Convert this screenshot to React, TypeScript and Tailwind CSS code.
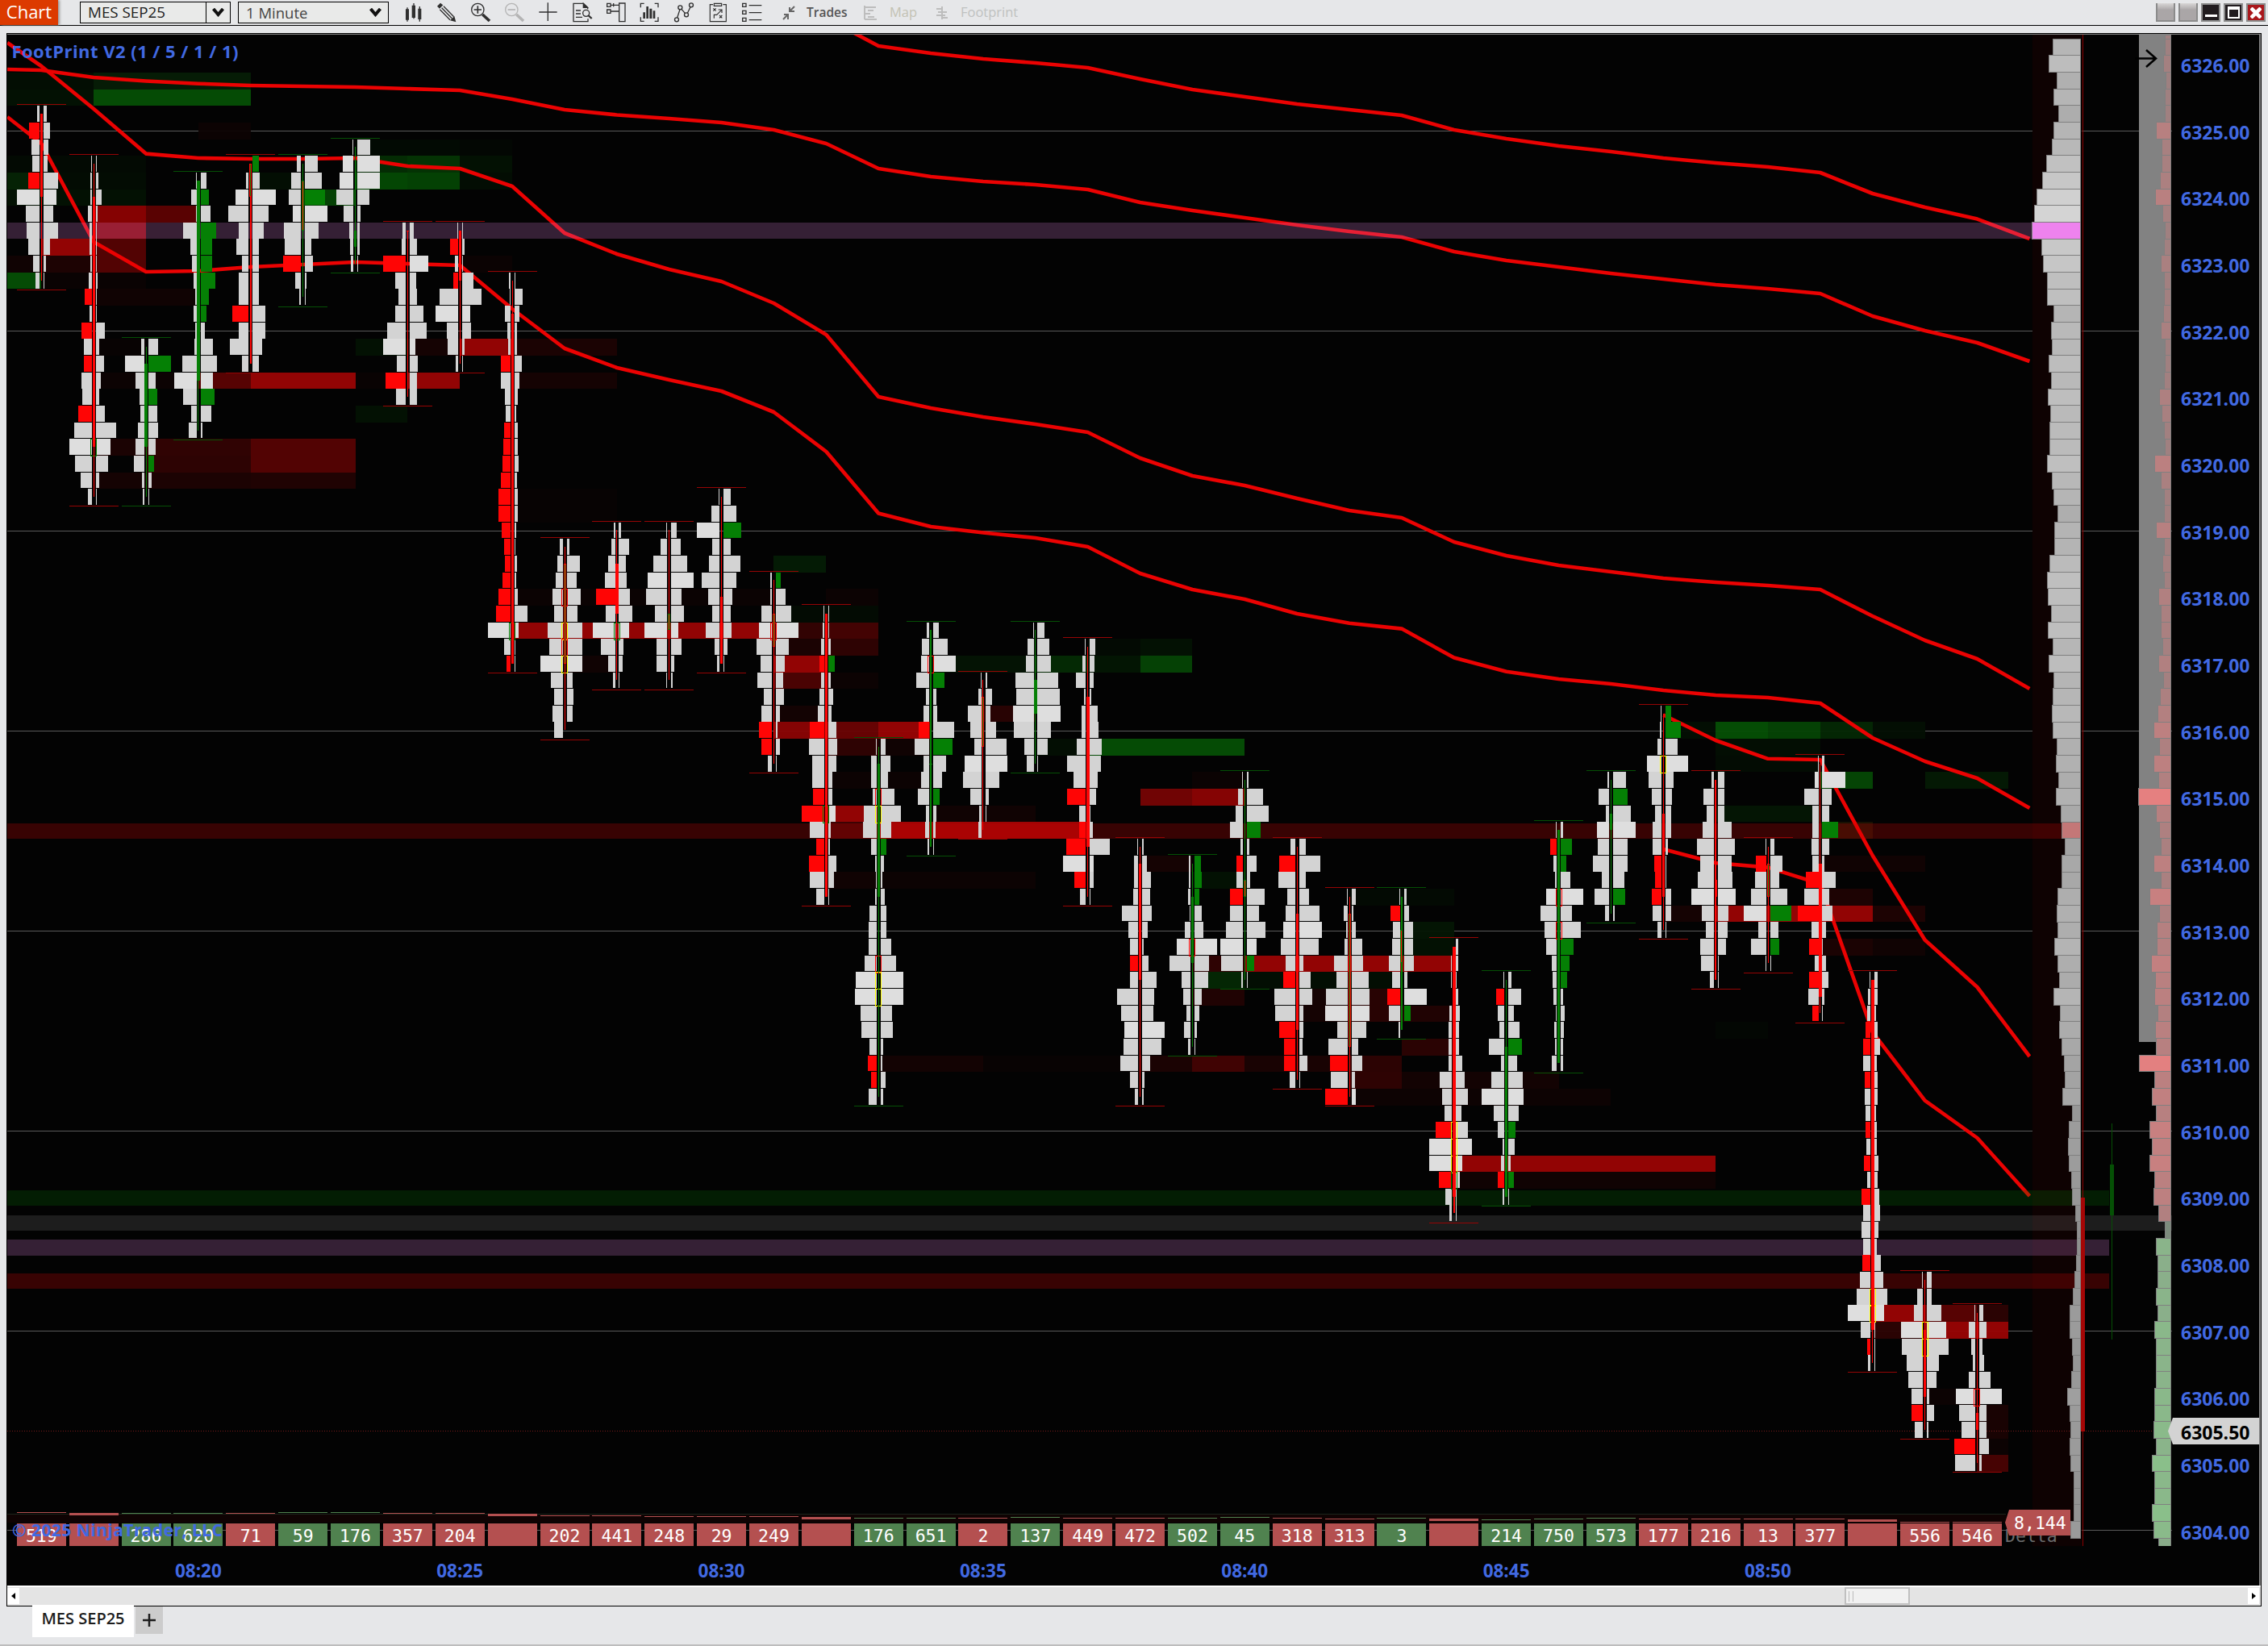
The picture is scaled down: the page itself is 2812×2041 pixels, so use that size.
import React from 'react';

type BodyKind = 'r' | 'g' | 'x' | 'y';

interface Candle {
  start: number; // first tick row, row 0 = 6325.00
  dir: 'r' | 'g';
  body: [number, number, BodyKind];
  rows: string; // bid/ask volume per tick, r / g marks an imbalance
  wick?: number;
  marks?: [number, string][];
}

const COL = 64.87;
const ROW = 20.655;
const X0 = 51.3;
const Y0 = 151.9;
const VOL = 1 / 2.24;

const colX = (c: number) => X0 + c * COL;
const rowY = (r: number) => Y0 + r * ROW;

const CANDLES: Candle[] = [
  { start: -1, dir: 'r', body: [-1, 4, 'r'], rows: '7/9 r29/18 23/13 20/11 r32/40 63/36 38/27 36/40 32/18 18/7 11/2' },
  { start: 2, dir: 'r', body: [4, 19, 'r'], marks: [[19, 'g']], rows: '2/3 4/7 4/16 11/5 7/3 7/3 4/3 9/5 r20/3 7/3 r29/25 22/9 r23/23 29/14 27/9 r38/25 49/56 63/41 47/34 31/9 11/3' },
  { start: 13, dir: 'g', body: [14, 19, 'g'], rows: '8/27 53/g63 24/22 13/g25 10/25 17/27 24/20 28/g16 6/9 4/2' },
  { start: 3, dir: 'g', body: [3, 15, 'g'], rows: '2/17 15/g24 2/29 38/g44 18/g33 13/g33 9/g42 4/g24 9/g17 4/13 6/35 40/47 62/35 38/g40 15/31 22/6' },
  { start: 2, dir: 'r', body: [2, 4, 'x'], wick: 2, rows: '2/g16 7/20 38/63 58/43 29/31 34/16 20/16 27/16 27/18 r45/34 29/36 52/27 18/16' },
  { start: 2, dir: 'g', body: [3, 6, 'y'], rows: '12/36 27/47 34/g56 23/62 48/38 45/18 r50/22 16/5 5/2' },
  { start: 1, dir: 'g', body: [6, 7, 'g'], rows: '2/36 29/63 38/63 47/34 27/9 11/7 9/7 7/2' },
  { start: 6, dir: 'r', body: [6, 6, 'r'], rows: '9/11 11/20 r63/51 29/18 20/20 29/38 52/47 63/16 25/22 r56/20 27/20' },
  { start: 6, dir: 'r', body: [6, 9, 'r'], rows: '2/2 r22/8 9/3 r13/31 51/53 62/22 31/24 29/8 6/2' },
  { start: 9, dir: 'r', body: [11, 32, 'r'], marks: [[30, 'g']], rows: '3/3 2/22 16/13 9/7 7/7 r27/20 27/13 16/9 12/4 r18/9 r20/9 r23/11 r27/7 r34/9 r33/9 r24/5 r18/3 r15/7 r22/5 r33/9 r40/36 62/12 18/3 r11/3' },
  { start: 25, dir: 'r', body: [26, 32, 'x'], marks: [[28, 'r'], [30, 'y'], [31, 'r'], [32, 'y']], rows: '9/7 14/36 20/27 29/40 23/29 43/43 38/43 63/43 34/16 23/18 29/16 23/2' },
  { start: 24, dir: 'r', body: [26, 29, 'r'], marks: [[30, 'g']], rows: '4/6 11/27 20/18 29/22 r53/31 26/38 62/29 40/13 20/11 6/2' },
  { start: 24, dir: 'r', body: [29, 30, 'y'], rows: '4/14 20/27 40/45 54/63 60/29 34/36 63/20 31/29 31/9 4/3' },
  { start: 22, dir: 'r', body: [28, 32, 'r'], rows: '3/20 23/36 63/g49 20/20 29/47 50/36 32/25 20/20 38/22 14/11 7/2' },
  { start: 27, dir: 'r', body: [29, 31, 'x'], marks: [[30, 'r']], rows: '6/g14 6/27 29/43 36/63 42/36 31/25 40/21 22/23 29/12 r36/5 r29/12 11/3' },
  { start: 29, dir: 'r', body: [29, 46, 'r'], marks: [[41, 'g']], rows: '2/2 5/2 9/7 r14/g18 9/7 14/14 18/9 r40/22 43/25 34/22 34/11 r31/11 r63/20 40/7 r23/5 r43/22 40/16 23/2' },
  { start: 37, dir: 'g', body: [38, 46, 'g'], marks: [[40, 'r'], [41, 'y'], [50, 'r'], [51, 'y'], [52, 'y']], rows: '2/13 15/27 15/20 11/38 35/56 38/29 15/g15 4/9 2/4 4/11 20/15 22/15 22/29 33/44 59/63 61/63 45/31 43/34 21/7 r25/4 r16/13 23/7' },
  { start: 30, dir: 'g', body: [38, 38, 'g'], wick: 2, marks: [[32, 'r']], rows: '7/16 20/40 23/63 36/g31 9/9 16/13 r29/58 40/g54 16/36 23/25 32/g18 9/9 11/7 5/2' },
  { start: 33, dir: 'r', body: [34, 37, 'x'], rows: '2/6 9/18 38/15 31/29 20/60 47/62 51/40 31/9 6/4 9/2' },
  { start: 30, dir: 'g', body: [33, 35, 'g'], rows: '2/20 16/32 22/38 51/58 49/61 58/63 54/36 25/29 18/2' },
  { start: 31, dir: 'r', body: [34, 43, 'r'], rows: '3/16 9/13 27/11 5/4 12/22 12/24 25/33 52/31 34/22 r52/18 18/2 r18/9 r54/56 63/11 r32/11 16/2' },
  { start: 43, dir: 'r', body: [44, 51, 'r'], rows: '2/3 11/12 11/25 15/23 45/27 27/16 24/3 r24/18 24/41 58/34 47/32 38/63 40/54 49/21 22/7 9/3' },
  { start: 44, dir: 'g', body: [46, 50, 'g'], wick: 1.5, marks: [[49, 'r']], rows: '5/g18 5/g20 7/g13 2/20 16/25 38/63 58/40 25/38 20/20 11/13 18/7 7/2' },
  { start: 39, dir: 'g', body: [45, 46, 'y'], rows: '2/4 13/44 20/60 35/g38 6/6 r17/27 17/9 r35/49 35/33 47/51 62/27 60/g20 4/2' },
  { start: 43, dir: 'r', body: [47, 54, 'r'], rows: '13/18 r45/58 47/18 22/27 27/56 34/63 40/54 27/11 r34/32 58/36 56/11 r45/11 r31/9 r31/23 16/2' },
  { start: 46, dir: 'r', body: [47, 55, 'x'], rows: '2/13 11/6 4/11 9/31 38/33 31/47 60/49 62/49 29/42 53/18 r49/31 47/9 r62/13' },
  { start: 46, dir: 'g', body: [48, 50, 'y'], wick: 1.5, rows: '2/7 r25/14 20/25 22/25 31/29 22/9 r34/63 31/g20 4/2' },
  { start: 49, dir: 'r', body: [49, 64, 'r'], wick: 1.5, marks: [[60, 'y'], [61, 'y'], [62, 'y'], [63, 'g']], rows: '2/5 4/5 4/2 2/5 7/11 11/9 9/7 11/18 34/23 27/32 22/14 r45/32 63/45 63/16 r36/11 18/2 7/2' },
  { start: 51, dir: 'g', body: [55, 64, 'g'], rows: '3/9 r23/36 18/15 14/31 43/g38 9/24 36/40 63/42 30/29 18/g20 5/18 9/7 r18/g15 5/2' },
  { start: 42, dir: 'g', body: [42, 56, 'g'], marks: [[46, 'r'], [48, 'r']], rows: '2/7 r18/g30 9/g16 4/27 29/63 45/32 33/56 29/g36 13/g25 11/g18 9/7 2/12 7/9 4/7 13/7' },
  { start: 39, dir: 'g', body: [41, 42, 'g'], wick: 1.5, rows: '5/36 29/g40 9/49 34/63 32/40 45/40 20/31 41/g34 11/4' },
  { start: 35, dir: 'r', body: [41, 46, 'r'], marks: [[38, 'y']], rows: '2/g15 4/g42 11/33 40/62 35/22 26/18 18/15 24/15 24/6 r20/2 r18/2 r26/15 24/15 11/2' },
  { start: 39, dir: 'r', body: [45, 46, 'r'], wick: 1.5, rows: '7/18 29/18 20/18 31/38 47/47 38/38 45/41 63/49 34/29 22/27 38/23 36/2 11/2' },
  { start: 43, dir: 'r', body: [44, 46, 'x'], rows: '2/11 r29/35 31/26 42/47 62/g60 22/24 42/g26 2/2' },
  { start: 38, dir: 'r', body: [44, 52, 'r'], rows: '2/5 11/63 40/25 18/18 18/g43 20/20 18/5 r36/36 40/20 r58/27 20/11 r27/2 11/11 r27/16 29/5 r16/2' },
  { start: 51, dir: 'r', body: [51, 72, 'r'], marks: [[70, 'y'], [71, 'y']], rows: '3/9 7/9 9/4 r14/9 r21/15 21/6 r16/9 16/9 14/4 r14/6 12/6 r18/11 9/9 r25/13 21/15 25/11 21/6 r23/17 31/24 38/36 63/26 29/2 r11/2 7/2' },
  { start: 69, dir: 'r', body: [72, 76, 'r'], marks: [[72, 'y'], [73, 'y']], rows: '4/14 17/14 26/40 62/54 60/60 45/34 42/27 31/7 r31/20 22/3' },
  { start: 71, dir: 'r', body: [77, 78, 'r'], marks: [[76, 'r']], rows: '3/11 18/20 11/9 7/13 18/31 54/63 45/20 38/20 r59/27 56/6' },
];

// resting liquidity: row, from column, to column, colour
const EDGE = -0.65;
const END = 37.6;
const HEAT: [number, number, number, string][] = [
  [-3, EDGE, 1, '#030f03'], [-3, 1, 4, '#061d06'], [-2, EDGE, 1, '#031203'], [-2, 1, 4, '#054f05'],
  [0, 3, 4, '#0d0303'], [1, 6, 8, '#020b03'], [1, 8, 9, '#030703'],
  [2, EDGE, 2, '#030b03'], [2, 6, 7, '#042e04'], [2, 7, 8, '#043604'], [2, 8, 9, '#031203'],
  [3, EDGE, 0, '#052405'], [3, 0, 2, '#030d03'], [3, 4, 5, '#030f03'], [3, 6, 7, '#044a04'], [3, 7, 8, '#044504'], [3, 8, 9, '#030e03'],
  [4, EDGE, 2, '#031203'], [4, 5, 6, '#054505'], [5, 1, 2, '#8c0202'], [5, 2, 3, '#5e0202'],
  [6, 1, 2, '#8c0202'], [6, 2, 3, '#080303'], [7, 0, 1, '#9a0404'], [7, 1, 2, '#560303'],
  [8, EDGE, 0, '#110303'], [8, 0, 1, '#1f0303'], [8, 1, 2, '#560303'], [8, 8, 9, '#0c0303'],
  [9, EDGE, 0, '#054f05'], [9, 0, 2, '#0b0303'], [10, 1, 3, '#110303'], [13, 1, 2, '#080303'],
  [13, 6, 7, '#031203'], [13, 7, 8, '#160303'], [13, 8, 9, '#9a0404'], [13, 9, 11, '#1c0303'],
  [15, 1, 3, '#0d0303'], [15, 3, 4, '#5c0303'], [15, 4, 6, '#9a0404'], [15, 6, 7, '#0a0303'], [15, 7, 8, '#9a0404'], [15, 9, 11, '#160303'],
  [17, 6, 7, '#031203'], [19, 1, 2, '#1c0303'], [19, 2, 4, '#330303'], [19, 4, 6, '#560303'],
  [20, 2, 4, '#2f0303'], [20, 4, 6, '#560303'], [21, 1, 2, '#160303'], [21, 2, 4, '#1e0303'], [21, 4, 6, '#220303'],
  [22, 9, 11, '#070303'], [23, 9, 11, '#070303'], [26, 14, 15, '#041c05'],
  [28, 9, 14, '#0c0303'], [28, 15, 16, '#0d0303'], [29, 14, 16, '#030c03'],
  [30, 9, 14, '#9a0404'], [30, 14, 15, '#350303'], [30, 15, 16, '#470303'], [31, 14, 15, '#1c0303'], [31, 15, 16, '#300303'],
  [32, 10, 11, '#110303'], [32, 14, 15, '#9a0404'], [32, 17, 19, '#041404'],
  [33, 14, 15, '#4e0303'], [33, 15, 16, '#0d0303'], [35, 14, 15, '#140303'], [35, 18, 19, '#2a0303'],
  [36, 14, 15, '#8c0404'], [36, 15, 16, '#6b0303'], [36, 16, 17, '#9a0404'], [37, 15, 16, '#300303'], [37, 16, 17, '#110303'],
  [39, 15, 17, '#0d0303'], [41, 15, 16, '#9a0404'], [41, 17, 19, '#110303'], [42, 15, 16, '#400303'], [42, 16, 20, '#a80404'],
  [45, 15, 16, '#110303'], [45, 16, 19, '#0d0303'], [31, 20, 21, '#030b03'], [31, 21, 22, '#031203'],
  [32, 19, 20, '#042b04'], [32, 20, 21, '#031603'], [32, 21, 22, '#054505'], [37, 19, 20, '#030f03'], [37, 20, 23, '#054f05'],
  [39, 22, 23, '#0c0303'], [40, 21, 22, '#760404'], [40, 22, 23, '#8c0404'], [44, 21, 22, '#160303'], [45, 22, 23, '#031203'],
  [50, 22, 23, '#300303'], [50, 23, 27, '#9a0404'], [51, 22, 23, '#042804'], [51, 23, 26, '#030f03'],
  [52, 22, 23, '#220303'], [52, 24, 25, '#160303'], [52, 25, 26, '#2a0303'], [53, 24, 25, '#160303'], [53, 25, 26, '#2a0303'], [53, 26, 27, '#220303'],
  [55, 26, 27, '#2c0303'], [56, 16, 18, '#140303'], [56, 18, 21, '#080303'], [56, 21, 22, '#1c0303'], [56, 22, 23, '#430303'], [56, 23, 25, '#1a0303'], [56, 25, 26, '#2e0303'],
  [57, 25, 26, '#300303'], [57, 26, 29, '#140303'], [58, 25, 30, '#0e0303'],
  [46, 25, 27, '#030b03'], [48, 26, 27, '#041604'], [49, 26, 27, '#031203'],
  [36, 31, 32, '#030f03'], [36, 32, 33, '#055005'], [36, 33, 34, '#054505'], [36, 34, 35, '#042804'], [36, 35, 36, '#030f03'],
  [37, 32, 34, '#030f03'], [38, 32, 34, '#030d03'], [39, 34, 35, '#054805'], [39, 36, END, '#041a04'], [41, 32, 34, '#041604'], [42, 34, 35, '#1a1203'],
  [44, 34, 36, '#110303'], [46, 34, 35, '#1f0303'], [47, 31, 32, '#160303'], [47, 32, 35, '#9a0404'], [47, 35, 36, '#1f0303'],
  [49, 34, 35, '#1c0303'], [49, 35, 36, '#110303'], [54, 32, 33, '#030703'], [62, 27, 32, '#9a0404'], [63, 27, 32, '#110303'],
  [71, 35, 36, '#9a0404'], [71, 36, 37, '#5c0303'], [71, 37, END, '#2c0303'], [72, 35, 36, '#2c0303'], [72, 36, END, '#9a0404'],
  [76, 36, 37, '#0d0303'], [77, 37, END, '#1a0303'], [78, 37, END, '#1a0303'], [79, 37, END, '#0d0303'], [80, 37, END, '#4a0303'],
];

// VWAP and its deviation lines, first value sits at column `from`
const LINES: { from: number; lead?: number; y: number[] }[] = [
  { from: 16, lead: 15.45, y: [38, 57, 66, 73, 78, 84, 98, 111, 120, 129, 136, 143, 161, 172, 181, 188, 196, 202, 207, 214, 240, 257, 271.6, 296] },
  { from: 0, lead: EDGE, y: [86, 87, 96, 100.5, 103.7, 106, 107, 108, 110, 112, 123, 136, 142.5, 147, 152, 161, 178, 209, 219, 225, 229, 235, 251, 261, 270, 279, 287, 294, 312, 323, 331, 339, 346, 353, 358, 364, 392, 410, 425, 448] },
  { from: 0, lead: EDGE, y: [53, 82, 135, 190.6, 196, 197, 197, 196, 206, 209, 231, 289, 315, 334, 349, 376, 415, 492, 506, 517, 526, 536, 568, 590, 602, 618, 633, 642, 672, 689, 701, 709, 717, 722, 726, 731, 764, 794, 817, 854] },
  { from: 0, lead: EDGE, y: [145, 178, 300, 337, 336, 331, 328, 325, 327, 329, 383, 432, 456, 471, 485, 511, 560, 636.5, 653, 660.5, 667, 678, 711, 731, 743, 761, 772.7, 779.6, 815.5, 832.7, 842, 848, 856, 862, 865, 872, 915, 944, 965, 1002] },
  { from: 31, y: [886.5, 918, 940.8, 942, 1061, 1165.5, 1224, 1310] },
  { from: 31, y: [1053, 1070, 1075.6, 1096, 1280, 1364.7, 1411, 1483] },
];

const PROFILE = [
  34, 39, 29, 33, 27, 33, 35, 42, 47, 54, 57, 60, 48, 46, 41, 41, 33, 36, 35, 39, 36, 40, 37, 38, 38, 41, 35, 33, 28, 32,
  32, 38, 41, 40, 36, 40, 34, 39, 33, 34, 35, 34, 29, 30, 27, 30, 24, 23, 19, 23, 23, 28, 29, 28, 32, 28, 26, 33, 25, 26,
  23, 20, 19, 22, 10, 14, 15, 14, 11, 10, 6, 4, 4, 5, 7, 9, 13, 13, 10, 9, 11, 16, 13, 12, 13, 12, 8, 8, 8, 12,
];

const BOOK = [
  7, 7, 9, 6, 7, 7, 18, 11, 11, 13, 19, 10, 7, 8, 12, 8, 8, 9, 12, 7, 7, 8, 14, 11, 8, 7, 20, 12, 8, 8, 18,
  8, 10, 8, 15, 12, 12, 10, 15, 9, 13, 16, 21, 14, 21, 15, 40, 18, 14, 12, 21, 12, 26, 14, 17, 17, 24, 19, 20, 16, 19,
  18, 39, 20, 23, 18, 26, 23, 26, 20, 21, 15, 7, 18, 16, 16, 18, 16, 20, 18, 18, 18, 20, 20, 21, 18, 23, 20, 20, 23, 21, 15,
];

// per-bar delta: value, sign, offset of the cumulative marker
const DELTA: [string, 'r' | 'g', number][] = [
  ['519', 'r', 1875], ['', 'r', 1876], ['286', 'g', 1876], ['620', 'g', 1876], ['71', 'r', 1876], ['59', 'g', 1875], ['176', 'g', 1875],
  ['357', 'r', 1876], ['204', 'r', 1876], ['', 'r', 1877], ['202', 'r', 1879], ['441', 'r', 1879], ['248', 'r', 1880], ['29', 'r', 1880],
  ['249', 'r', 1880], ['', 'r', 1881], ['176', 'g', 1882], ['651', 'g', 1882], ['2', 'r', 1882], ['137', 'g', 1881], ['449', 'r', 1882],
  ['472', 'r', 1882], ['502', 'g', 1882], ['45', 'g', 1881], ['318', 'r', 1882], ['313', 'r', 1883], ['3', 'g', 1882], ['', 'r', 1883],
  ['214', 'g', 1884], ['750', 'g', 1883], ['573', 'g', 1882], ['177', 'r', 1883], ['216', 'r', 1883], ['13', 'r', 1883], ['377', 'r', 1883],
  ['', 'r', 1884], ['556', 'r', 1887], ['546', 'r', 1887],
];

const PRICES = Array.from({ length: 23 }, (_, i) => (6326 - i).toFixed(2));
const TIMES = ['08:20', '08:25', '08:30', '08:35', '08:40', '08:45', '08:50'];

const TONE: Record<string, string> = { r: '#ff0505', g: '#058005', y: '#ffff00' };

function FootprintCandle({ candle, col }: { candle: Candle; col: number }) {
  const x = colX(col);
  const rows = candle.rows.split(' ').map((cell) => {
    const [bid, ask] = cell.split('/');
    return {
      bid: parseInt(bid.replace('r', ''), 10),
      ask: parseInt(ask.replace('g', ''), 10),
      sell: bid[0] === 'r',
      buy: ask[0] === 'g',
    };
  });
  const mid = ROW / 2 - 0.5;
  const top = rowY(candle.start);
  const bottom = rowY(candle.start + rows.length);
  const wick = candle.wick ?? 1;
  const [open, close, kind] = candle.body;
  const bodyX = Math.round(x - 1.5);
  const bodyTop = rowY(open) + mid;
  const bodyHeight = Math.max(1, (close - open) * ROW);
  const edge = candle.dir === 'r' ? '#960404' : '#055005';
  return (
    <g shapeRendering="crispEdges">
      <rect x={x - 30.5} y={top - 2} width={61} height={1} fill={edge} />
      <rect x={x - 30.5} y={bottom + 0.4} width={61} height={1} fill={edge} />
      {rows.map((row, i) => {
        const y = rowY(candle.start + i);
        const tone = row.bid >= 62 || row.ask >= 62 ? '#dedede' : '#d3d3d3';
        return (
          <g key={i}>
            <rect x={x - 2.3 - row.bid * VOL} y={y} width={row.bid * VOL} height={19.8} fill={row.sell ? TONE.r : tone} />
            <rect x={x + 2.6} y={y} width={row.ask * VOL} height={19.8} fill={row.buy ? TONE.g : tone} />
          </g>
        );
      })}
      {candle.marks?.map(([row, tone], i) => (
        <rect key={i} x={Math.round(x) - 3.5} y={Math.round(rowY(row)) + 0.5} width={6.5} height={20.5} fill="none" stroke={TONE[tone]} />
      ))}
      <rect x={x - wick / 2} y={top + mid} width={wick} height={bottom - top - ROW} fill={TONE[candle.dir]} />
      {kind === 'x' || kind === 'y' ? (
        <>
          <rect x={bodyX} y={bodyTop} width={3} height={bodyHeight} fill={kind === 'x' ? TONE.r : TONE.g} />
          <rect x={bodyX + 1} y={bodyTop + 1} width={1} height={bodyHeight - 2} fill={kind === 'x' ? TONE.g : TONE.r} />
        </>
      ) : (
        <rect x={x - 1.6} y={bodyTop} width={3.4} height={bodyHeight} fill={TONE[kind]} />
      )}
    </g>
  );
}

function Plot() {
  return (
    <svg className="block shrink-0" width={2684} height={1874} viewBox="9 43 2684 1874">
      {/* Grid */}
      {Array.from({ length: 8 }, (_, i) => (
        <rect key={i} x={9} y={Math.round(162.4 + i * 12 * ROW)} width={2684} height={1} fill="#5a5a5a" />
      ))}

      {/* Heat map */}
      <g shapeRendering="crispEdges">
        {HEAT.map(([row, from, to, color], i) => (
          <rect key={i} x={colX(from)} y={rowY(row)} width={(to - from) * COL} height={ROW} fill={color} fillOpacity={0.95} />
        ))}
        <rect x={2520} y={43} width={61} height={1874} fill="#0e0202" />
      </g>

      {/* VWAP lines */}
      <g fill="none" stroke="#eb0202" strokeWidth={4.6} strokeLinejoin="round">
        {LINES.map((line, i) => (
          <polyline
            key={i}
            points={line.y
              .map((y, k) => {
                const c = line.lead !== undefined ? (k === 0 ? line.lead : line.from + k - 1) : line.from + k;
                return `${colX(c).toFixed(1)},${y}`;
              })
              .join(' ')}
          />
        ))}
      </g>

      {/* Session levels */}
      <g shapeRendering="crispEdges">
        <rect x={9} y={276} width={2511} height={20} fill="#dd80dd" fillOpacity={0.23} />
        <rect x={9} y={1021} width={2571} height={19} fill="#c80505" fillOpacity={0.27} />
        <rect x={9} y={1476} width={2606} height={19} fill="#058005" fillOpacity={0.21} />
        <rect x={9} y={1507} width={2684} height={19} fill="#d0d0d0" fillOpacity={0.13} />
        <rect x={9} y={1537} width={2606} height={20} fill="#dd80dd" fillOpacity={0.23} />
        <rect x={9} y={1579} width={2606} height={19} fill="#c80505" fillOpacity={0.27} />
      </g>

      {/* Last price */}
      <line x1={9} x2={2690} y1={1774.5} y2={1774.5} stroke="#7a1a1a" strokeDasharray="1 2" />

      {CANDLES.map((candle, i) => (
        <FootprintCandle key={i} candle={candle} col={i} />
      ))}

      {/* Volume profile */}
      <g shapeRendering="crispEdges">
        {PROFILE.map((w, i) => {
          const row = i - 5;
          const tone = Math.round(138 + w * 1.3);
          const fill = row === 6 ? '#ee82ee' : row === 42 ? '#c47777' : `rgb(${tone},${tone},${tone})`;
          return <rect key={i} x={2579.5 - w} y={rowY(row) - 0.3} width={w} height={ROW} fill={fill} stroke="#808080" />;
        })}
        <rect x={2582} y={43} width={1} height={1874} fill="#8b0000" />
        <rect x={2580} y={1485} width={5} height={290} fill="#a50606" />
        <rect x={2618} y={1393} width={1} height={268} fill="#055005" />
        <rect x={2616} y={1444} width={5} height={63} fill="#055005" />
      </g>

      {/* Order book */}
      <g shapeRendering="crispEdges">
        <rect x={2652} y={43} width={40} height={1249} fill="#828282" />
        {BOOK.map((w, i) => {
          const row = i - 6;
          const y = Math.max(43, rowY(row) - 0.3);
          const h = row === 85 ? 10 : rowY(row + 1) - 0.3 - y;
          const level = Math.round(row < 66 ? 145 + w * 2.1 : 140 + w * 2.2);
          const fill = row === 66 ? '#7d8c7d' : row < 66 ? `rgb(${level},128,128)` : `rgb(138,${level},138)`;
          return <rect key={i} x={2691.5 - w} y={y} width={w} height={h} fill={fill} stroke="#808080" />;
        })}
      </g>
      <path d="M2647 72.5H2673M2661 62L2673 72.5L2661 83" fill="none" stroke="#000" strokeWidth={2.6} />

      {/* Delta strip */}
      <g shapeRendering="crispEdges">
        <rect x={9} y={1878} width={2478} height={10} fill="#0f0303" />
        <rect x={9} y={1877} width={2478} height={1} fill="#1c241c" />
        {DELTA.map(([value, side, y], i) => (
          <g key={i} fill={side === 'r' ? '#b45050' : '#50824f'}>
            <rect x={colX(i) - 30.5} y={y} width={61} height={value ? 1 : 3} />
            <rect x={colX(i) - 30.5} y={1889} width={61} height={28} />
          </g>
        ))}
      </g>
      <g className="font-['DejaVu_Sans_Mono',monospace] text-[21.5px]">
        <g fill="#ffffff" textAnchor="middle">
          {DELTA.map(([value], i) => (
            <text key={i} x={colX(i)} y={1911.5}>{value}</text>
          ))}
        </g>
        <text x={2486} y={1911.5} fill="#6b6b6b">Delta</text>
        <path d="M2486 1888L2491 1872H2567V1904H2491Z" fill="#b45050" />
        <text x={2497} y={1896} fill="#ffffff">8,144</text>
      </g>

      <g className="font-['Open_Sans',sans-serif] font-bold" fill="#4169e1">
        <text x={14.5} y={72} fontSize={22} textLength={281}>FootPrint V2 (1 / 5 / 1 / 1)</text>
        <text x={15} y={1905} fontSize={21} textLength={261}>© 2025 NinjaTrader, LLC</text>
      </g>
    </svg>
  );
}

function PriceAxis() {
  return (
    <div className="relative w-[109px] shrink-0 font-['Open_Sans',sans-serif] text-[23px] font-bold">
      <div className="-mt-[3px] flex flex-col pl-[11px] text-[#4169e1]">
        {PRICES.map((price) => (
          <div key={price} className="flex h-[82.68px] items-center leading-none">{price}</div>
        ))}
      </div>
      {/* Last price tag */}
      <div className="absolute top-[1715px] -left-[5px] flex h-[33px] w-[113px] items-center bg-[#d3d3d3] pt-[3px] pl-[16px] leading-none text-black [clip-path:polygon(0_50%,6px_0,100%_0,100%_100%,6px_100%)]">
        6305.50
      </div>
    </div>
  );
}

const TOOLS: { name: string; tone?: string; art: React.ReactNode }[] = [
  { name: 'Bar type', art: <path fill="currentColor" stroke="none" d="M33 34h12v40h-12zM37 28h4v52h-4zM56 20h13v46h-13zM61 12h4v58h-4zM79 32h12v40h-12zM83 24h4v56h-4z" /> },
  {
    name: 'Draw',
    art: (
      <>
        <path fill="currentColor" stroke="none" d="M24 23L36 11L46 19L33 32ZM94 82L72 76L88 60Z" />
        <path strokeWidth={4} d="M34 35L72 74M48 23L86 62M41 29L79 68" />
      </>
    ),
  },
  {
    name: 'Zoom in',
    art: (
      <>
        <circle cx="49" cy="36" r="23" strokeWidth={4} />
        <path strokeWidth={5} d="M35 36H63M49 22V50" />
        <path strokeWidth={11} d="M67 54L93 78" />
      </>
    ),
  },
  {
    name: 'Zoom out',
    tone: 'text-[#b4b4b4]',
    art: (
      <>
        <circle cx="49" cy="36" r="23" strokeWidth={4} />
        <path strokeWidth={5} d="M35 36H63" />
        <path strokeWidth={11} d="M67 54L93 78" />
      </>
    ),
  },
  { name: 'Crosshair', art: <path d="M25 45H92M58 10V78" /> },
  {
    name: 'Data box',
    art: (
      <>
        <path d="M81 70V80H27V13H64L80 28V34M36 39H54M36 51H54M36 64H60" />
        <path fill="currentColor" d="M64 13V28H79Z" />
        <circle cx="74" cy="49" r="12" />
        <path strokeWidth={7} d="M82 57L95 69" />
      </>
    ),
  },
  { name: 'Chart trader', art: <path d="M26 13H39V25H26ZM26 36H39V49H26ZM71 12H93V80H71ZM39 19H71M39 42H71M50 12V25" /> },
  {
    name: 'Properties',
    art: (
      <>
        <path d="M25 28V13H38M77 13H90V28M25 64V79H38M77 79H90V64" />
        <path fill="currentColor" stroke="none" d="M34 46h8v23h-8zM46 24h8v45h-8zM58 32h9v37h-9zM71 40h8v29h-8z" />
      </>
    ),
  },
  {
    name: 'Indicators',
    art: (
      <>
        <path d="M35 66L45 35M51 34L64 49M73 49L84 26" />
        <circle cx="33" cy="73" r="7.5" />
        <circle cx="46" cy="28" r="7.5" />
        <circle cx="69" cy="55" r="7.5" />
        <circle cx="87" cy="19" r="7.5" />
      </>
    ),
  },
  { name: 'Strategies', art: <path d="M42 17H31V80H91V17H79M46 13H74V22H46ZM43 31L53 41M53 31L43 41M66 57L76 67M76 57L66 67M46 68V55H56L74 37M62 36H75V48" strokeWidth={3.5} /> },
  { name: 'Drawing objects', art: <path d="M26 13H39V25H26ZM26 40H39V52H26ZM26 67H39V79H26ZM50 20H97M50 47H97M50 74H97" /> },
];

function Toolbar() {
  return (
    <header className="flex h-[32px] shrink-0 items-start border-b border-black font-['Open_Sans',sans-serif]">
      <div className="flex h-[31px] w-[72px] items-center justify-center bg-[#dc3a00] pb-[2px] text-[22px] text-white shadow-[2px_0_3px_#9a9a9a]">Chart</div>
      <div className="mt-[2px] ml-[27px] flex h-[27px] w-[187px] border border-black bg-[#e9eae9] text-[18.8px] leading-[24px] text-[#222]">
        <span className="flex-1 pl-[9px]">MES SEP25</span>
        <span className="flex w-[30px] items-center justify-center border-l border-black">
          <Chevron />
        </span>
      </div>
      <div className="mt-[2px] ml-[9px] flex h-[27px] w-[187px] items-center border border-black bg-[#e9eae9] pr-[8px] text-[18.5px] leading-[24px] text-[#444]">
        <span className="flex-1 pl-[9px]">1 Minute</span>
        <Chevron />
      </div>
      <div className="ml-[10px] flex">
        {TOOLS.map((tool) => (
          <button key={tool.name} aria-label={tool.name} className={`block ${tool.tone ?? 'text-[#2f2f2f]'}`}>
            <svg width={42} height={31} viewBox="0 0 126 93" fill="none" stroke="currentColor" strokeWidth={4}>
              {tool.art}
            </svg>
          </button>
        ))}
      </div>
      <div className="flex h-[31px] items-center text-[16.5px] leading-none">
        <svg className="ml-[16px]" width={16} height={18} viewBox="0 0 16 18" fill="none" stroke="#666" strokeWidth={2}>
          <path d="M15 1L10 6M9 2V7H15M1 17L6 12M2 11H7V17" />
        </svg>
        <span className="ml-[14px] w-[51px] text-[15.5px] font-semibold text-[#555]">Trades</span>
        <svg className="ml-[20px]" width={16} height={18} viewBox="0 0 16 18" fill="none" stroke="#bdbdbd" strokeWidth={2}>
          <path d="M1 0V17M1 2H15M5 6H12M1 10H8M5 14H13M1 17H16" />
        </svg>
        <span className="ml-[16px] w-[36px] text-[#c3c2b4]">Map</span>
        <svg className="ml-[21px]" width={16} height={18} viewBox="0 0 16 18" fill="none" stroke="#bdbdbd" strokeWidth={2}>
          <path d="M8 1V17M1 4H8M3 8H14M1 12H12M8 15H15" />
        </svg>
        <span className="ml-[15px] text-[#bfc1c0]">Footprint</span>
      </div>
      <div className="mt-[4px] mr-[3px] ml-auto flex gap-[4px]">
        <span className="h-[23px] w-[24px] border-2 border-t-0 border-[#8b8b8b] bg-linear-to-b from-[#d8d6d6] to-[#aaa6a7] to-40%" />
        <span className="h-[23px] w-[24px] border-2 border-t-0 border-[#8b8b8b] bg-linear-to-b from-[#d8d6d6] to-[#aaa6a7] to-40%" />
        <span className="flex h-[23px] w-[24px] items-end justify-center border-2 border-[#8b8b8b] bg-[#211c1f] pb-[4px]">
          <i className="h-[3px] w-[15px] bg-white" />
        </span>
        <span className="flex h-[23px] w-[24px] items-center justify-center border-2 border-[#8b8b8b] bg-[#211c1f]">
          <i className="h-[15px] w-[15px] border-2 border-t-4 border-white" />
        </span>
        <span className="flex h-[23px] w-[24px] items-center justify-center border-2 border-[#8b8b8b] bg-[#a9181c]">
          <svg width={14} height={14} viewBox="0 0 14 14" stroke="#fff" strokeWidth={4.5}>
            <path d="M1 1L13 13M13 1L1 13" />
          </svg>
        </span>
      </div>
    </header>
  );
}

function Chevron() {
  return (
    <svg width={15} height={11} viewBox="0 0 15 11" fill="none" stroke="#111" strokeWidth={4}>
      <path d="M1.5 1L7.5 8L13.5 1" />
    </svg>
  );
}

export default function App() {
  return (
    <div className="flex h-[2041px] w-[2812px] flex-col overflow-hidden border-b-2 border-[#bdbdbd] bg-[#e6e7e9]">
      <Toolbar />

      {/* Chart panel */}
      <main className="mt-[9px] ml-[8px] flex h-[1951px] w-[2796px] shrink-0 flex-col border border-black">
        <div className="flex h-[1924px] border-t border-r-2 border-[#808080] bg-[#030303]">
          <div className="w-[2684px] shrink-0">
            <Plot />
            <div className="flex h-[49px] pl-[74.7px] font-['Open_Sans',sans-serif] text-[22.5px] leading-none font-bold text-[#4169e1]">
              {TIMES.map((time) => (
                <span key={time} className="w-[324.35px] shrink-0 pt-[20px] text-center">{time}</span>
              ))}
            </div>
          </div>
          <PriceAxis />
        </div>
        {/* Scrollbar */}
        <div className="flex flex-1 items-start border-t-2 border-white bg-[#e4e4e4]">
          <span className="mt-px flex h-[20px] w-[15px] items-center justify-center bg-white">
            <i className="border-y-4 border-r-[5px] border-y-transparent border-r-black" />
          </span>
          <span className="ml-[2263px] flex h-[22px] w-[81px] items-center gap-[4px] border-2 border-[#c0c0c0] bg-[#f1f1f1] pl-[3px]">
            <i className="h-[13px] w-px bg-[#bbb]" />
            <i className="h-[13px] w-px bg-[#bbb]" />
          </span>
          <span className="mt-px mr-[2px] ml-auto flex h-[20px] w-[14px] items-center justify-center bg-white">
            <i className="border-y-4 border-l-[5px] border-y-transparent border-l-black" />
          </span>
        </div>
      </main>

      {/* Tabs */}
      <footer className="-mt-[2px] flex items-start gap-[2px] pl-[40px] font-['Open_Sans',sans-serif]">
        <div className="flex h-[40px] w-[126px] items-center justify-center bg-white pb-[6px] text-[20px] font-semibold text-[#1c1c1c]">MES SEP25</div>
        <div className="mt-[2px] flex h-[34px] w-[34px] items-center justify-center bg-[#cccccc]">
          <svg width={16} height={16} viewBox="0 0 16 16" stroke="#1c1c1c" strokeWidth={2.5}>
            <path d="M0 8H16M8 0V16" />
          </svg>
        </div>
      </footer>
    </div>
  );
}
